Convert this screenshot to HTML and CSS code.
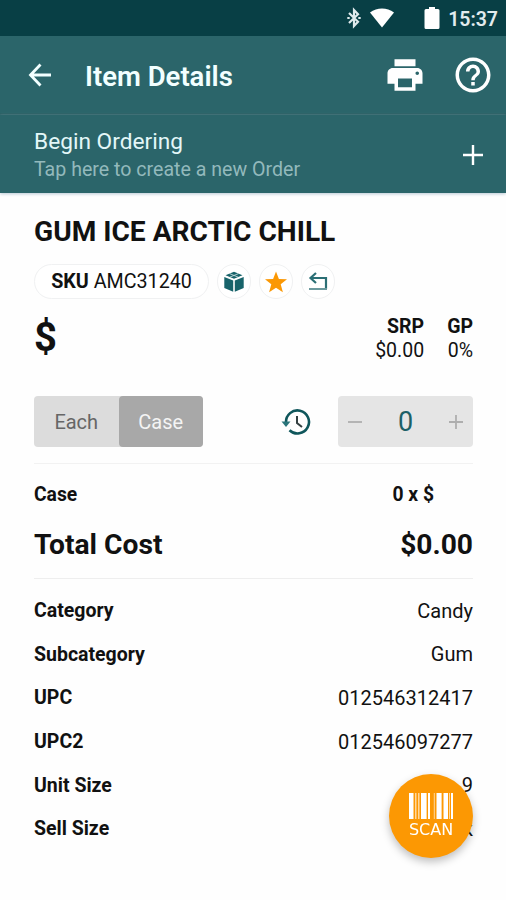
FILE: index.html
```
<!DOCTYPE html>
<html lang="en">
  <head>
    <title>Item Details</title>
    <meta charset="UTF-8" />
    <meta name="viewport" content="width=device-width, initial-scale=1" />
    <link rel="stylesheet" href="styles.css">
  </head>
  <body>
    <div class="status-bar">
      <svg class="bluetooth" width="14" height="22" viewBox="0 0 14 22">
        <path d="M2 6l9 8.800L7 19V3l4 4.200L2 16" />
        <path d="M.3 11h2.400M11.300 11h2.400" />
      </svg>
      <svg class="wifi" width="26" height="20" viewBox="0 0 26 20">
        <path d="M13 19.500L1 4.500C8-.8 18-.8 25 4.500z" />
      </svg>
      <svg class="battery" width="16" height="24" viewBox="0 0 16 24">
        <path d="M5 1h6v2h3q1.500 0 1.500 1.500v17q0 1.500-1.500 1.500H2Q.5 23 .5 21.500v-17Q.5 3 2 3h3z" />
      </svg>
      <span class="clock">15:37</span>
    </div>

    <header class="app-bar">
      <svg class="back" width="24" height="24" viewBox="0 0 24 24">
        <path d="M12.500 1.500L2.500 12l10 10.500M2.500 12H23" />
      </svg>
      <h1>Item Details</h1>
      <svg class="print" width="42" height="42" viewBox="0 0 24 24">
        <path d="M19 8H5c-1.660 0-3 1.340-3 3v6h4v4h12v-4h4v-6c0-1.660-1.340-3-3-3zm-3 11H8v-5h8v5zm3-7c-.55 0-1-.45-1-1s.45-1 1-1 1 .45 1 1-.45 1-1 1zm-1-9H6v4h12V3z" />
      </svg>
      <svg class="help" width="42" height="42" viewBox="0 0 24 24">
        <path d="M11 18h2v-2h-2v2zm1-16C6.480 2 2 6.480 2 12s4.480 10 10 10 10-4.480 10-10S17.520 2 12 2zm0 18c-4.410 0-8-3.590-8-8s3.590-8 8-8 8 3.590 8 8-3.590 8-8 8zm0-14c-2.210 0-4 1.790-4 4h2c0-1.100.9-2 2-2s2 .9 2 2c0 2-3 1.750-3 5h2c0-2.250 3-2.500 3-5 0-2.210-1.790-4-4-4z" />
      </svg>
    </header>

    <div class="order-bar">
      <div>
        <div class="order-title">Begin Ordering</div>
        <div class="order-hint">Tap here to create a new Order</div>
      </div>
      <svg width="22" height="22" viewBox="0 0 22 22">
        <path d="M11 1v20M1 11h20" />
      </svg>
    </div>

    <main class="item">
      <h2>GUM ICE ARCTIC CHILL</h2>

      <div class="chips">
        <span class="chip sku"><span><b>SKU</b> AMC31240</span></span>
        <span class="chip round">
          <svg width="20" height="22" viewBox="0 0 20 22">
            <path class="fill" d="M10 .8L18.500 4.200 10 7.700 1.500 4.200zM.3 6l8.900 3.500v11.200L.3 17zM19.700 6l-8.900 3.500v11.200l8.900-3.700z" />
            <path class="cut" d="M5.500 2.600l8.800 3.600M5.700 6.200l8.800-3.600" />
          </svg>
        </span>
        <span class="chip round">
          <svg width="24" height="22" viewBox="0 0 24 22">
            <path class="star" d="M12 .5l2.900 7.400 8.100.4-6.300 5 2.200 7.900L12 16.700l-6.900 4.500 2.200-7.900-6.300-5 8.100-.4z" />
          </svg>
        </span>
        <span class="chip round">
          <svg width="20" height="20" viewBox="0 0 20 20">
            <path class="line" d="M8 1L2.500 6 8 11M2.500 6H18v11" />
            <path class="base" d="M1 17h18" />
          </svg>
        </span>
      </div>

      <div class="price-row">
        <span class="price">$</span>
        <div class="stat">
          <b>SRP</b>
          <span>$0.00</span>
        </div>
        <div class="stat">
          <b>GP</b>
          <span>0%</span>
        </div>
      </div>

      <div class="controls">
        <div class="toggle">
          <button>Each</button>
          <button class="active">Case</button>
        </div>
        <svg class="history" width="30" height="28" viewBox="0 0 30 28">
          <path class="ring" d="M5 14.500A11.500 11.500 0 1 1 8.500 22.200" />
          <path class="tip" d="M.5 13.500h9L5 19z" />
          <path class="hand" d="M16 8v7l5 4" />
        </svg>
        <div class="stepper">
          <svg width="16" height="16" viewBox="0 0 16 16"><path d="M1 8h14" /></svg>
          <span>0</span>
          <svg width="16" height="16" viewBox="0 0 16 16"><path d="M1 8h14M8 1v14" /></svg>
        </div>
      </div>

      <div class="totals">
        <div class="row case-row"><b>Case</b><b>0 x $</b></div>
        <div class="row total-row"><b>Total Cost</b><b>$0.00</b></div>
      </div>

      <div class="details">
        <div class="row"><b>Category</b><span>Candy</span></div>
        <div class="row"><b>Subcategory</b><span>Gum</span></div>
        <div class="row"><b>UPC</b><span>012546312417</span></div>
        <div class="row"><b>UPC2</b><span>012546097277</span></div>
        <div class="row"><b>Unit Size</b><span>9</span></div>
        <div class="row"><b>Sell Size</b><span>k</span></div>
      </div>
    </main>

    <button class="scan">
      <svg width="44" height="26" viewBox="0 0 44 26">
        <path class="bars" d="M0 0h4.500v26H0zM12 0h5v26h-5zM19 0h2v26h-2zM27.500 0h4.500v26h-4.500zM34.500 0h4.500v26h-4.500zM42 0h2v26h-2z" />
        <path class="thin" d="M6 0h1.500v26H6zM9 0h1.500v26H9zM17 0h1v26h-1zM24.800 0h1v26h-1zM32 0h1v26h-1zM40 0h1v26h-1z" />
      </svg>
      <span>SCAN</span>
    </button>
  </body>
</html>
```

FILE: styles.css
```
html,
body {
  margin: 0;
  padding: 0;
  overflow: hidden;
  background: #fefefe;
  color: #111;
  font-family: Roboto, sans-serif;
}

body {
  height: 900px;
}

svg {
  display: block;
  flex: none;
}

b {
  font-weight: 700;
}

button {
  border: none;
  padding: 0;
  font-family: inherit;
}

/* Header */
.status-bar {
  display: flex;
  align-items: center;
  box-sizing: border-box;
  height: 36px;
  padding-right: 8px;
  justify-content: flex-end;
  background: #083f45;
  color: #fff;
}

.bluetooth {
  margin-right: 8px;
  fill: none;
  stroke: #dfeaec;
  stroke-width: 2.2;
}

.wifi {
  margin-right: 29px;
  fill: #fff;
}

.battery {
  margin-right: 8px;
  fill: #fff;
}

.clock {
  padding-top: 2px;
  font-size: 19.5px;
  font-weight: 600;
  color: #e2ecee;
}

.app-bar {
  display: flex;
  align-items: center;
  box-sizing: border-box;
  height: 79px;
  padding: 0 12px 0 28px;
  background: #2b656a;
  border-bottom: 2px solid #285e63;
}

.back {
  margin-right: 33px;
  fill: none;
  stroke: #f2ffff;
  stroke-width: 2.8;
}

.app-bar h1 {
  flex: 1;
  margin: 0;
  padding-top: 4px;
  font-size: 27.5px;
  font-weight: 600;
  color: #f2ffff;
}

.print,
.help {
  fill: #fff;
}

.print {
  margin-right: 26px;
}

.order-bar {
  display: flex;
  align-items: center;
  justify-content: space-between;
  box-sizing: border-box;
  height: 78px;
  padding: 1px 22px 0 34px;
  background: #2b656a;
  box-shadow: 0 1px 3px #b9c9d4;
}

.order-title {
  font-size: 22.7px;
  line-height: 29px;
  color: #e3f7f8;
}

.order-hint {
  font-size: 19.6px;
  line-height: 27px;
  color: #93b9bc;
}

.order-bar svg {
  stroke: #fff;
  stroke-width: 2.4;
}

/* Item */
.item {
  padding: 19px 33px 0 34px;
}

.item h2 {
  margin: 0;
  padding-top: 1px;
  font-size: 28.1px;
  line-height: 38px;
  font-weight: 700;
  white-space: nowrap;
}

.chips {
  display: flex;
  gap: 8px;
  margin-top: 13px;
}

.chip {
  display: flex;
  align-items: center;
  justify-content: center;
  box-sizing: border-box;
  height: 35px;
  border: 1px solid #f0f1f2;
  border-radius: 18px;
  background: #fff;
}

.chip.round {
  width: 34px;
}

.chip.sku {
  width: 175px;
  font-size: 19.7px;
}

.chip .fill {
  fill: #17636a;
}

.chip .cut {
  fill: none;
  stroke: #d4e4e5;
  stroke-width: 0.8;
}

.chip .star {
  fill: #fb9804;
}

.chip .line {
  fill: none;
  stroke: #2b6f75;
  stroke-width: 2.2;
}

.chip .base {
  stroke: #6b999d;
  stroke-width: 2;
}

.price-row {
  display: flex;
  gap: 23px;
  height: 50px;
  margin-top: 16px;
}

.price {
  flex: 1;
  font-size: 40px;
  line-height: 46px;
  font-weight: 700;
}

.stat {
  display: flex;
  flex-direction: column;
  align-items: flex-end;
  font-size: 19.5px;
  line-height: 24px;
}

.controls {
  display: flex;
  align-items: center;
  margin-top: 31px;
}

.toggle {
  display: flex;
  width: 169px;
  height: 51px;
  margin-right: 78px;
  border-radius: 4px;
  background: #dcdcdc;
}

.toggle button {
  flex: 1;
  border-radius: 4px;
  background: none;
  color: #666;
  font-size: 20px;
}

.toggle .active {
  background: #a8a8a8;
  color: #f4f4f4;
}

.history {
  margin-right: auto;
  fill: none;
  stroke: #0f565b;
}

.history .ring {
  stroke-width: 2.6;
}

.history .tip {
  fill: #2a747a;
  stroke: none;
}

.history .hand {
  stroke: #333f40;
  stroke-width: 2;
}

.stepper {
  display: flex;
  align-items: center;
  justify-content: space-between;
  box-sizing: border-box;
  width: 135px;
  height: 51px;
  padding: 0 9px;
  border-radius: 4px;
  background: #e5e5e5;
  color: #1c6067;
  font-size: 27px;
}

.stepper svg {
  stroke: #aeaeae;
  stroke-width: 1.8;
}

.row {
  display: flex;
  align-items: center;
  justify-content: space-between;
}

.totals {
  box-sizing: border-box;
  height: 116px;
  margin-top: 16px;
  padding-top: 9px;
  border-top: 1px solid #f2f2f2;
  border-bottom: 1px solid #eee;
}

.case-row {
  height: 43px;
  padding-right: 39px;
  font-size: 19.3px;
}

.total-row {
  height: 56px;
  font-size: 28.2px;
}

.details {
  padding-top: 10px;
}

.details .row {
  height: 43.6px;
  font-size: 20px;
}

.details b {
  font-size: 19.5px;
}

/* Floating scan button */
.scan {
  position: fixed;
  right: 33px;
  bottom: 42px;
  display: flex;
  flex-direction: column;
  align-items: center;
  justify-content: center;
  width: 84px;
  height: 84px;
  border-radius: 50%;
  background: #fc9803;
  color: #fff;
  box-shadow: 0 4px 8px rgba(0, 0, 0, 0.25);
}

.scan .bars {
  fill: #fff;
}

.scan .thin {
  fill: #ffd79b;
}

.scan span {
  margin-top: 2px;
  font-family: "DejaVu Sans", sans-serif;
  font-size: 16px;
  line-height: 18px;
}
```
